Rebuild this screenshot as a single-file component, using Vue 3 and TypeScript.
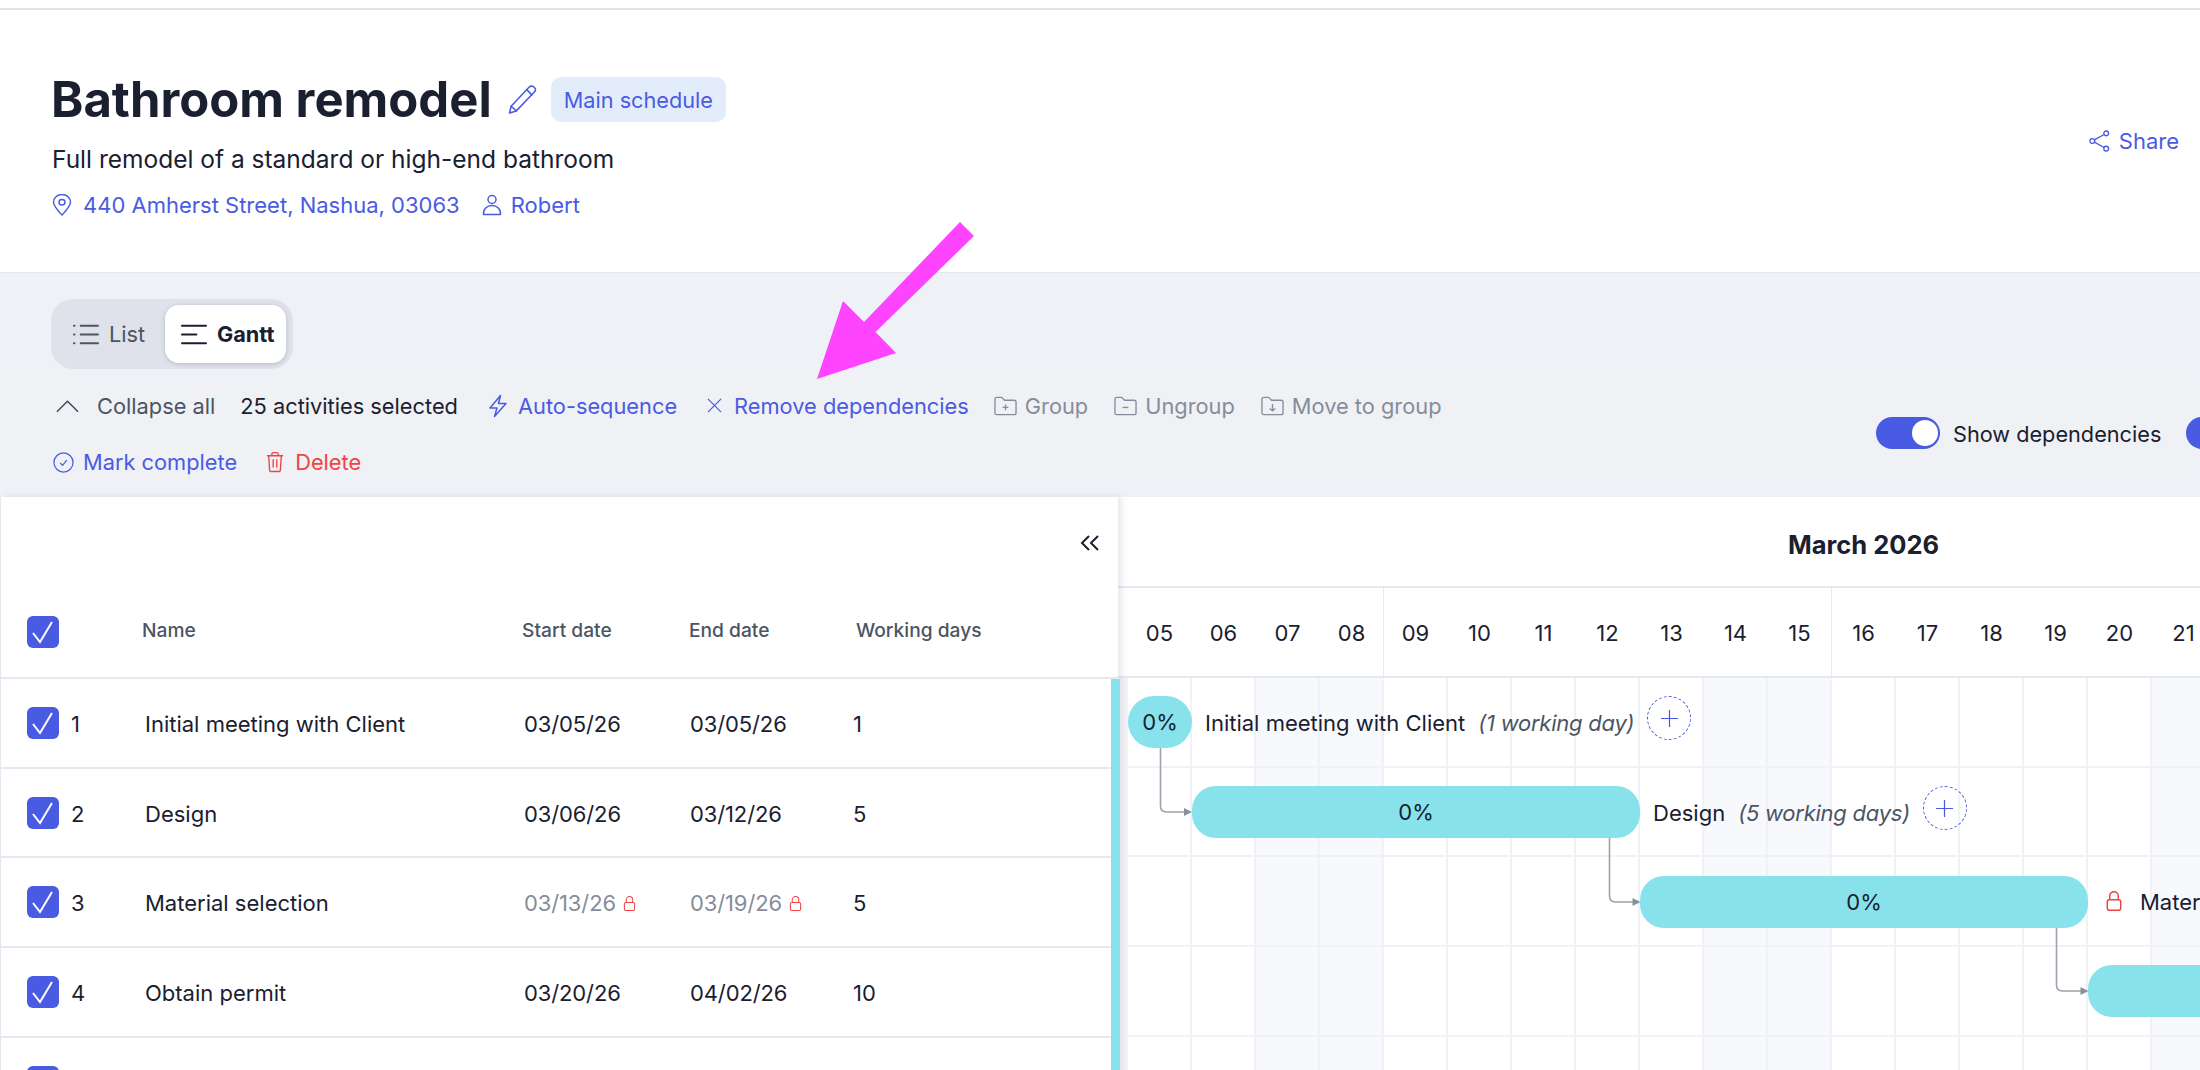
<script setup lang="ts">
interface Row { n: number; name: string; start: string; end: string; days: string; locked?: boolean }
const rows: Row[] = [
  { n: 1, name: 'Initial meeting with Client', start: '03/05/26', end: '03/05/26', days: '1' },
  { n: 2, name: 'Design', start: '03/06/26', end: '03/12/26', days: '5' },
  { n: 3, name: 'Material selection', start: '03/13/26', end: '03/19/26', days: '5', locked: true },
  { n: 4, name: 'Obtain permit', start: '03/20/26', end: '04/02/26', days: '10' },
  { n: 5, name: '', start: '', end: '', days: '' },
]
const dayWidth = 64
const dayLabels = ['05','06','07','08','09','10','11','12','13','14','15','16','17','18','19','20','21']
const weekend = (i: number) => [2, 3, 9, 10, 16].includes(i)
const weekStart = (i: number) => i === 4 || i === 11
const bars = [
  { top: 18, left: 0.5, width: 64, label: '0%' , radius: 26},
  { top: 108, left: 64.5, width: 448, label: '0%', radius: 24 },
  { top: 198, left: 512.5, width: 448, label: '0%', radius: 24 },
  { top: 287, left: 960.5, width: 448, label: '', radius: 24 },
]
const links = [
  'M32.5 70 V128 Q32.5 134 38.5 134 H58',
  'M481.5 159 V218 Q481.5 224 487.500 224 H506',
  'M928.5 249 V307 Q928.5 313 934.5 313 H954',
]
const heads = ['56,130 64,134 56,138', '504.5,220 512.5,224 504.5,228', '952.5,309 960.5,313 952.5,317']
</script>

<template>
  <div class="page">
    <div class="topline"></div>
    <header class="head">
      <div class="head-main">
        <div class="title-row">
          <h1>Bathroom remodel</h1>
          <svg class="pencil" viewBox="0 0 28 28" fill="none" stroke="currentColor" stroke-width="1.5" stroke-linejoin="round" stroke-linecap="round"><path d="M21 1.500 C22.5 0.5 25 1.500 26 3 C26.8 4.300 26.500 5.800 25.500 6.800 L8 25 L1.500 27 L3 20.500 Z"/><path d="M18 4.500 L23 9.500"/><path d="M3 20.500 L8 25"/></svg>
          <span class="badge">Main schedule</span>
        </div>
        <p class="desc">Full remodel of a standard or high-end bathroom</p>
        <div class="meta">
          <svg class="ic-pin" viewBox="0 0 20 24" preserveAspectRatio="none" fill="none" stroke="currentColor" stroke-width="1.5"><path d="M10 23 C5 17 1.5 13 1.5 9 A8.5 8.5 0 0 1 18.500 9 C18.500 13 15 17 10 23 Z" stroke-linejoin="round"/><circle cx="10" cy="9" r="3"/></svg>
          <span class="addr">440 Amherst Street, Nashua, 03063</span>
          <svg class="ic-user" viewBox="0 0 20 22" fill="none" stroke="currentColor" stroke-width="1.5"><circle cx="10" cy="5.500" r="4"/><path d="M1.500 20.500 C1 15 5 11.500 10 11.500 C15 11.500 19 15 18.500 20.500 Z" stroke-linejoin="round"/></svg>
          <span>Robert</span>
        </div>
      </div>
      <div class="share">
        <svg class="ic-share" viewBox="0 0 22 23" fill="none" stroke="currentColor" stroke-width="1.4"><circle cx="3.500" cy="11.500" r="2.500"/><circle cx="18" cy="3.500" r="2.500"/><circle cx="18" cy="19.500" r="2.500"/><path d="M5.700 10.300 L15.800 4.700 M5.700 12.700 L15.800 18.300"/></svg>
        <span>Share</span>
      </div>
    </header>

    <section class="toolbar">
      <div class="tb-left">
        <div class="segment">
          <div class="seg seg-off">
            <svg class="ic-seg" viewBox="0 0 27 21" fill="none" stroke="currentColor" stroke-width="2" stroke-linecap="round"><path d="M8 1.500 H26 M8 10.500 H26 M8 19.500 H26"/><path d="M1 1.500 H1.600 M1 10.500 H1.600 M1 19.500 H1.600"/></svg>
            <span>List</span>
          </div>
          <div class="seg seg-on">
            <svg class="ic-seg" viewBox="0 0 27 21" fill="none" stroke="currentColor" stroke-width="2" stroke-linecap="round"><path d="M1 1.500 H26 M1 10.500 H16 M1 19.500 H26"/></svg>
            <span>Gantt</span>
          </div>
        </div>
        <div class="actions first">
          <span class="act grey collapse"><svg class="ic-chev" viewBox="0 0 24 14" fill="none" stroke="#3f4754" stroke-width="1.500"><path d="M1 13 L12 2 L23 13"/></svg>Collapse all</span>
          <span class="act dark">25 activities selected</span>
          <span class="act blue"><svg class="ic-bolt" viewBox="0 0 20 24" fill="none" stroke="currentColor" stroke-width="1.500" stroke-linejoin="round"><path d="M12.500 1.500 L2 14 H9 L6.500 22.500 L18 9.500 H10.500 Z"/></svg>Auto-sequence</span>
          <span class="act blue tight"><svg class="ic-x" viewBox="0 0 16 16" fill="none" stroke="currentColor" stroke-width="1.300"><path d="M1 1 L15 15 M15 1 L1 15"/></svg>Remove dependencies</span>
          <span class="act muted"><svg class="ic-folder" viewBox="0 0 24 20" fill="none" stroke="currentColor" stroke-width="1.400" stroke-linejoin="round"><path d="M1 3 Q1 1 3 1 H8 L11 4 H21 Q23 4 23 6 V17 Q23 19 21 19 H3 Q1 19 1 17 Z"/><path d="M12 8.500 V14.500 M9 11.500 H15"/></svg>Group</span>
          <span class="act muted"><svg class="ic-folder" viewBox="0 0 24 20" fill="none" stroke="currentColor" stroke-width="1.400" stroke-linejoin="round"><path d="M1 3 Q1 1 3 1 H8 L11 4 H21 Q23 4 23 6 V17 Q23 19 21 19 H3 Q1 19 1 17 Z"/><path d="M9 11.500 H15"/></svg>Ungroup</span>
          <span class="act muted"><svg class="ic-folder" viewBox="0 0 24 20" fill="none" stroke="currentColor" stroke-width="1.400" stroke-linejoin="round"><path d="M1 3 Q1 1 3 1 H8 L11 4 H21 Q23 4 23 6 V17 Q23 19 21 19 H3 Q1 19 1 17 Z"/><path d="M12 8 V15 M9 12.500 L12 15 L15 12.500"/></svg>Move to group</span>
        </div>
        <div class="actions second">
          <span class="act blue"><svg class="ic-check" viewBox="0 0 22 22" fill="none" stroke="currentColor" stroke-width="1.300"><circle cx="11" cy="11" r="10"/><path d="M7.500 11.500 L10 14 L14.500 8.500"/></svg>Mark complete</span>
          <span class="act red"><svg class="ic-trash" viewBox="0 0 20 24" fill="none" stroke="currentColor" stroke-width="1.500" stroke-linejoin="round"><path d="M1 5 H19 M6.500 5 V3 Q6.500 1.500 8 1.500 H12 Q13.500 1.500 13.500 3 V5"/><path d="M3 5 L4 21 Q4.100 22.500 5.500 22.500 H14.500 Q15.900 22.500 16 21 L17 5"/><path d="M8 9 V18 M12 9 V18"/></svg>Delete</span>
        </div>
      </div>
      <div class="toggles">
        <div class="toggle"><span class="knob"></span></div>
        <span class="toggle-label">Show dependencies</span>
        <div class="toggle second-toggle"><span class="knob"></span></div>
      </div>
    </section>

    <section class="board">
      <div class="left">
        <div class="collapse-row">
          <svg class="ic-dbl" viewBox="0 0 20 16" fill="none" stroke="#1a2030" stroke-width="2"><path d="M9 1 L2 8 L9 15 M18 1 L11 8 L18 15"/></svg>
        </div>
        <div class="tr th">
          <span class="box"><svg viewBox="0 0 32 32" fill="none" stroke="#fff" stroke-width="2"><path d="M6 17 L13 26 L25 6"/></svg></span>
          <span class="c-name hname">Name</span>
          <span class="c-start hstart">Start date</span>
          <span class="c-end hend">End date</span>
          <span class="c-days hdays">Working days</span>
        </div>
        <div v-for="r in rows" :key="r.n" class="tr td">
          <span class="box"><svg viewBox="0 0 32 32" fill="none" stroke="#fff" stroke-width="2"><path d="M6 17 L13 26 L25 6"/></svg></span>
          <span v-if="r.name" class="num">{{ r.n }}</span>
          <span class="c-name">{{ r.name }}</span>
          <span class="c-start date" :class="{ locked: r.locked }">{{ r.start }}<svg v-if="r.locked" class="ic-lock" viewBox="0 0 14 18" fill="none" stroke="#ef4444" stroke-width="1.100"><path d="M3.500 8 V5 A3.500 3.500 0 0 1 10.500 5 V8"/><rect x="1.500" y="8" width="11" height="8.500" rx="1.500"/></svg></span>
          <span class="c-end date" :class="{ locked: r.locked }">{{ r.end }}<svg v-if="r.locked" class="ic-lock" viewBox="0 0 14 18" fill="none" stroke="#ef4444" stroke-width="1.100"><path d="M3.500 8 V5 A3.500 3.500 0 0 1 10.500 5 V8"/><rect x="1.500" y="8" width="11" height="8.500" rx="1.500"/></svg></span>
          <span class="c-days">{{ r.days }}</span>
        </div>
        <div class="teal"></div>
      </div>
      <div class="chart">
        <div class="month"><span>March 2026</span></div>
        <div class="days">
          <span v-for="(d, i) in dayLabels" :key="d" class="day" :class="{ wk: weekStart(i) }" :style="{ width: dayWidth + 'px' }">{{ d }}</span>
        </div>
        <div class="grid">
          <div class="cols">
            <span v-for="(d, i) in dayLabels" :key="d" class="col" :class="{ off: weekend(i) }" :style="{ width: dayWidth + 'px' }"></span>
          </div>
          <div class="lines">
            <div v-for="k in 5" :key="k" class="line"></div>
          </div>
          <svg class="links" width="1080" height="400" fill="none">
            <path v-for="l in links" :key="l" :d="l" stroke="#9ca3af" stroke-width="1.600"/>
            <polygon v-for="h in heads" :key="h" :points="h" fill="#8b919c"/>
          </svg>
          <div v-for="(b, i) in bars" :key="i" class="bar" :style="{ top: b.top + 'px', left: b.left + 'px', width: b.width + 'px', borderRadius: b.radius + 'px' }">{{ b.label }}</div>
          <div class="tag t1"><span>Initial meeting with Client</span><em>(1 working day)</em><span class="plus"><svg viewBox="0 0 20 20" fill="none" stroke="#4a5be3" stroke-width="1.300"><path d="M10 1 V19 M1 10 H19"/></svg></span></div>
          <div class="tag t2"><span>Design</span><em>(5 working days)</em><span class="plus"><svg viewBox="0 0 20 20" fill="none" stroke="#4a5be3" stroke-width="1.300"><path d="M10 1 V19 M1 10 H19"/></svg></span></div>
          <div class="tag t3"><svg class="ic-lock big" viewBox="0 0 14 18" fill="none" stroke="#ef4444" stroke-width="1.200"><path d="M3.500 8 V5 A3.500 3.500 0 0 1 10.500 5 V8"/><rect x="1.500" y="8" width="11" height="8.500" rx="1.500"/></svg><span>Material selection</span></div>
        </div>
      </div>
    </section>

    <svg class="annot" width="2200" height="1070" viewBox="0 0 2200 1070"><polygon points="817,379 843,301 864,322 960,222 974,236 875.500,332 896,353" fill="#ff44ff"/></svg>
  </div>
</template>

<style>
html, body { margin: 0; background: #fff; }
</style>

<style scoped>
.page { position: relative; width: 2200px; height: 1070px; overflow: hidden; background: #fff; font-family: Inter, "Liberation Sans", sans-serif; color: #1a2030; font-size: 22px; }
.topline { height: 2px; margin-top: 8px; background: #e3e4e8; }
.head { height: 263px; box-sizing: border-box; border-bottom: 1px solid #e4e6ea; padding: 67px 21px 0 51px; display: flex; justify-content: space-between; align-items: flex-start; }
.title-row { display: flex; align-items: center; height: 45px; }
h1 { margin: 0; font-size: 49px; line-height: 45px; font-weight: 700; letter-spacing: 0; color: #1a2030; font-optical-sizing: none; }
.pencil { width: 29px; height: 29px; color: #4a5be3; margin-left: 16px; }
.badge { margin-left: 14px; height: 45px; box-sizing: border-box; padding: 0 13px; display: flex; align-items: center; background: #e3ecfb; border-radius: 10px; color: #4a5be3; font-size: 21.700px; }
.desc { margin: 22px 0 0 1px; font-size: 24.500px; line-height: 30px; color: #1a2030; }
.meta { margin-top: 18px; display: flex; align-items: center; height: 26px; color: #4a5be3; font-size: 22px; }
.ic-pin { width: 20px; height: 22px; margin: 0 11px 0 1px; }
.ic-user { width: 20px; height: 22px; margin: 0 9px 0 22px; }
.share { margin-top: 51px; margin-right: 0; display: flex; align-items: center; gap: 9px; color: #4a5be3; font-size: 22px; }
.ic-share { width: 21px; height: 22px; }

.toolbar { height: 224px; box-sizing: border-box; background: linear-gradient(#eef1f5, #f0f1f6); padding: 26px 0 0 51px; position: relative; display: flex; justify-content: space-between; }
.segment { width: 242px; height: 70px; box-sizing: border-box; padding: 6px 7px 6px 6px; background: #dfe2ea; border-radius: 22px; display: flex; align-items: stretch; }
.seg { display: flex; align-items: center; font-size: 21.700px; }
.seg-off { width: 108px; color: #4b5563; padding-left: 16px; box-sizing: border-box; gap: 10px; }
.seg-on { width: 121px; background: #fff; color: #1a2030; border-radius: 14px; padding-left: 16px; box-sizing: border-box; gap: 10px; font-weight: 700; box-shadow: 0 1px 4px rgba(60, 70, 100, 0.25); }
.ic-seg { width: 26px; height: 21px; flex: none; }
.actions { display: flex; align-items: center; font-size: 21.800px; height: 30px; }
.actions.first { margin-top: 21.500px; margin-left: 5px; }
.actions.second { margin-top: 26.500px; margin-left: 2px; }
.act { display: flex; align-items: center; white-space: nowrap; }
.collapse { color: #4b5563; gap: 18px; margin-right: 25px; }
.ic-chev { width: 23px; height: 14px; }
.dark { color: #1a2030; margin-right: 30px; }
.blue { color: #4a5be3; }
.muted { color: #868d9a; }
.red { color: #ef4444; }
.first .blue { margin-right: 30px; gap: 10px; }
.first .blue.tight { margin-right: 25px; }
.first .muted { gap: 8px; margin-right: 26px; }
.second .blue { gap: 9px; margin-right: 29px; }
.second .red { gap: 11px; }
.ic-bolt { width: 20px; height: 24px; }
.ic-x { width: 15px; height: 15px; margin-right: 2px; }
.ic-folder { width: 23px; height: 20px; }
.ic-check { width: 21px; height: 21px; }
.ic-trash { width: 18px; height: 22px; }
.toggles { position: absolute; left: 1876px; top: 144px; display: flex; align-items: center; }
.toggle { width: 64px; height: 32px; border-radius: 16px; background: #4a5be3; position: relative; flex: none; }
.knob { position: absolute; right: 2px; top: 3px; width: 26px; height: 26px; border-radius: 50%; background: #fff; }
.toggle-label { margin: 2px 0 0 13px; font-size: 21.700px; color: #1a2030; white-space: nowrap; }
.second-toggle { margin-left: 25px; }

.board { display: flex; height: 573px; }
.left { width: 1118px; flex: none; border-left: 1px solid #e6e8f0; box-sizing: border-box; background: #fff; position: relative; box-shadow: 4px 0 6px rgba(90, 100, 130, 0.14); z-index: 1; }
.collapse-row { height: 90px; box-sizing: border-box; display: flex; justify-content: flex-end; padding: 38px 18px 0 0; }
.ic-dbl { width: 20px; height: 16px; }
.tr { display: flex; align-items: center; position: relative; box-sizing: border-box; border-bottom: 2px solid #e6e8f0; }
.th { height: 92px; font-size: 19.200px; font-weight: 500; color: #4b5563; }
.td { height: 89.700px; font-size: 22px; padding-top: 2px; }
.box { position: absolute; left: 26px; width: 32px; height: 32px; border-radius: 6px; background: #4a5be3; }
.box svg { display: block; width: 32px; height: 32px; }
.th .box { top: 29px; }
.td .box { top: 28px; }
.num { position: absolute; left: 70px; }
.c-name, .c-start, .c-end, .c-days { position: absolute; display: flex; align-items: center; white-space: nowrap; }
.c-name { left: 144px; }
.c-start { left: 523px; }
.c-end { left: 689px; }
.c-days { left: 852px; }
.date { letter-spacing: -0.12px; }
.hname { left: 141px; top: 31px; }
.hstart { left: 521px; top: 31px; }
.hend { left: 688px; top: 31px; }
.hdays { left: 855px; top: 31px; }
.locked { color: #868d9a; }
.ic-lock { width: 13px; height: 17px; margin-left: 7px; }
.ic-lock.big { width: 18px; height: 22px; margin: 0 17px 0 0; }
.teal { position: absolute; right: -2px; top: 182px; bottom: 0; width: 9px; background: #86e1ec; }

.chart { flex: 1; min-width: 0; position: relative; }
.month { height: 91px; box-sizing: border-box; border-bottom: 2px solid #e6e8f0; position: relative; font-weight: 700; font-size: 25.500px; font-optical-sizing: none; }
.month span { position: absolute; left: 670px; top: 33px; line-height: 30px; white-space: nowrap; }
.days { height: 90px; box-sizing: border-box; border-bottom: 2px solid #e6e8f0; padding-left: 9.500px; display: flex; }
.day { flex: none; box-sizing: border-box; text-align: center; line-height: 90px; font-size: 22px; }
.wk { box-shadow: -1px 0 0 #e8eaf0; }
.grid { position: relative; height: 400px; overflow: hidden; padding-left: 9.500px; }
.grid::before { content: ""; position: absolute; left: 2px; top: 0; bottom: 0; width: 7.500px; background: linear-gradient(90deg, #e2e5ed, #f4f5f9); z-index: 1; }
.cols { display: flex; height: 100%; }
.col { flex: none; box-sizing: border-box; border-right: 2px solid #f0f2f7; }
.col.off { background: #f8f9fd; }
.lines { position: absolute; left: 0; right: 0; top: 0; }
.line { height: 89.700px; box-sizing: border-box; border-bottom: 2px solid #f0f2f7; }
.links { position: absolute; left: 9.500px; top: 0; }
.bar { position: absolute; height: 52px; background: #88e2ec; display: flex; align-items: center; justify-content: center; margin-left: 9.500px; font-size: 22px; }
.tag { position: absolute; display: flex; align-items: center; white-space: nowrap; font-size: 22px; }
.tag > span:not(.plus), .tag em { margin-top: 10px; }
.tag em { color: #4b5563; font-style: italic; margin-left: 13px; letter-spacing: -0.25px; }
.plus { width: 44px; height: 44px; box-sizing: border-box; border: 1px dashed #4a5be3; border-radius: 50%; display: flex; align-items: center; justify-content: center; margin-left: 13px; }
.plus svg { width: 19px; height: 19px; }
.t1 { left: 87px; top: 18px; height: 44px; }
.t2 { left: 535px; top: 108px; height: 44px; }
.t3 { left: 987px; top: 205px; height: 36px; }
.t3 > span:not(.plus) { margin-top: 2px; }
.annot { position: absolute; left: 0; top: 0; pointer-events: none; z-index: 5; }
</style>
